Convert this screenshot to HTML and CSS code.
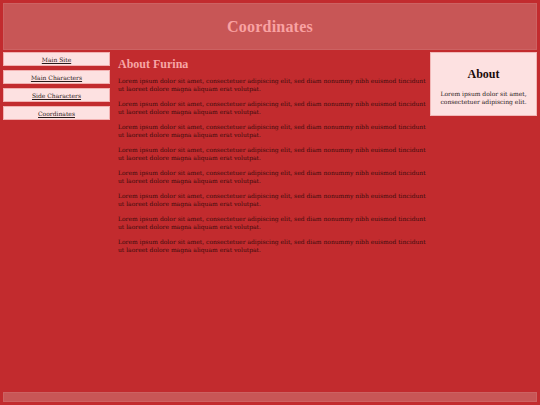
FILE: index.html
```html
<!DOCTYPE html>
<html lang="en">
<head>
<meta charset="utf-8">
<title>Coordinates</title>
<link rel="stylesheet" href="styles.css">
</head>
<body>
<div class="page">
  <header class="site-header">
    <h1 class="site-title">Coordinates</h1>
  </header>
  <div class="layout">
    <nav class="side-nav">
      <a class="nav-btn" href="#">Main Site</a>
      <a class="nav-btn" href="#">Main Characters</a>
      <a class="nav-btn" href="#">Side Characters</a>
      <a class="nav-btn" href="#">Coordinates</a>
    </nav>
    <main class="content">
      <h2 class="content-title">About Furina</h2>
      <p>Lorem ipsum dolor sit amet, consectetuer adipiscing elit, sed diam nonummy nibh euismod tincidunt ut laoreet dolore magna aliquam erat volutpat.</p>
      <p>Lorem ipsum dolor sit amet, consectetuer adipiscing elit, sed diam nonummy nibh euismod tincidunt ut laoreet dolore magna aliquam erat volutpat.</p>
      <p>Lorem ipsum dolor sit amet, consectetuer adipiscing elit, sed diam nonummy nibh euismod tincidunt ut laoreet dolore magna aliquam erat volutpat.</p>
      <p>Lorem ipsum dolor sit amet, consectetuer adipiscing elit, sed diam nonummy nibh euismod tincidunt ut laoreet dolore magna aliquam erat volutpat.</p>
      <p>Lorem ipsum dolor sit amet, consectetuer adipiscing elit, sed diam nonummy nibh euismod tincidunt ut laoreet dolore magna aliquam erat volutpat.</p>
      <p>Lorem ipsum dolor sit amet, consectetuer adipiscing elit, sed diam nonummy nibh euismod tincidunt ut laoreet dolore magna aliquam erat volutpat.</p>
      <p>Lorem ipsum dolor sit amet, consectetuer adipiscing elit, sed diam nonummy nibh euismod tincidunt ut laoreet dolore magna aliquam erat volutpat.</p>
      <p>Lorem ipsum dolor sit amet, consectetuer adipiscing elit, sed diam nonummy nibh euismod tincidunt ut laoreet dolore magna aliquam erat volutpat.</p>
    </main>
    <aside class="side-box">
      <h3 class="box-title">About</h3>
      <p class="box-text">Lorem ipsum dolor sit amet, consectetuer adipiscing elit.</p>
    </aside>
  </div>
  <footer class="site-footer"></footer>
</div>
</body>
</html>
```
FILE: styles.css
```css
html, body {
  margin: 0;
  padding: 0;
  background: #c22b2e;
}
body {
  font-family: "DejaVu Serif", "Liberation Serif", serif;
  color: #3b0b0d;
}
.page {
  box-sizing: border-box;
  height: 405px;
  padding: 3px;
  display: flex;
  flex-direction: column;
}
.site-header {
  box-sizing: border-box;
  height: 47px;
  background: #c85656;
  border: 1px solid #cd6262;
  display: flex;
  align-items: center;
  justify-content: center;
}
.site-title {
  margin: 0;
  font-family: "Liberation Serif", serif;
  font-size: 16px;
  font-weight: bold;
  color: #f9a2a2;
  letter-spacing: 0.2px;
}
.layout {
  flex: 1;
  display: flex;
  align-items: flex-start;
  padding-top: 2px;
}
.side-nav {
  width: 107px;
  display: flex;
  flex-direction: column;
  gap: 4px;
}
.nav-btn {
  box-sizing: border-box;
  height: 14px;
  display: flex;
  align-items: center;
  justify-content: center;
  background: #fde1e1;
  border: 1px solid #f2b0b0;
  color: #2a1a1a;
  font-size: 6px;
  text-decoration: underline;
}
.content {
  flex: 1;
  padding: 0 2px 0 8px;
}
.content-title {
  margin: 5px 0 5px;
  font-family: "Liberation Serif", serif;
  font-size: 12px;
  font-weight: bold;
  color: #f7a6a6;
}
.content p {
  margin: 0 0 7px;
  font-size: 6px;
  line-height: 8px;
}
.side-box {
  box-sizing: border-box;
  width: 107px;
  height: 64px;
  background: #fde1e1;
  border: 1px solid #f2b8b8;
  text-align: center;
  padding: 14px 4px 0;
}
.box-title {
  margin: 0 0 8px;
  font-family: "Liberation Serif", serif;
  font-size: 12px;
  font-weight: bold;
  color: #1a0a0a;
}
.box-text {
  margin: 0;
  font-size: 6px;
  line-height: 8px;
  color: #2a1a1a;
}
.site-footer {
  box-sizing: border-box;
  height: 10px;
  background: #c85656;
  border: 1px solid #cd6262;
}
```
